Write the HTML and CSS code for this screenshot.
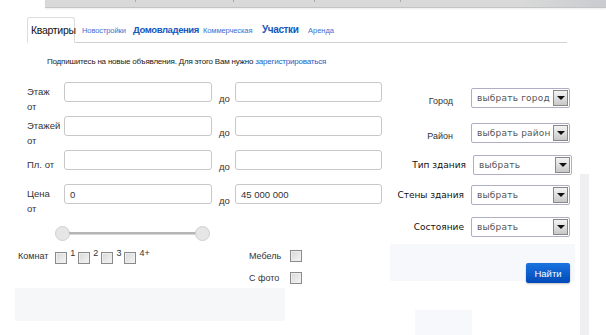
FILE: index.html
```
<!DOCTYPE html>
<html lang="ru">
<head>
    <meta charset="UTF-8">
    <meta name="viewport" content="width=device-width, initial-scale=1.0">
    <title>Поиск недвижимости</title>
    <link rel="stylesheet" href="styles.css">
</head>
<body>
    <div class="page">
        <!-- верхняя панель -->
        <div class="top-bar">
            <span class="top-cell c1"></span>
            <span class="top-cell c2"></span>
            <span class="top-cell c3"></span>
            <span class="top-cell c4"></span>
            <span class="top-cell c5"></span>
        </div>

        <!-- вкладки -->
        <div class="tabs">
            <span class="tab active">Квартиры</span>
            <a class="tab small t-new" href="#">Новостройки</a>
            <a class="tab big t-house" href="#">Домовладения</a>
            <a class="tab small t-comm" href="#">Коммерческая</a>
            <a class="tab big t-land" href="#">Участки</a>
            <a class="tab small t-rent" href="#">Аренда</a>
        </div>

        <p class="notice">Подпишитесь на новые объявления. Для этого Вам нужно <a href="#">зарегистрироваться</a></p>

        <div class="search">
            <!-- левая колонка -->
            <div class="search-left">
                <div class="range-grid">
                    <label class="range-label">Этаж<br>от</label>
                    <input class="text-input" type="text">
                    <span class="to">до</span>
                    <input class="text-input" type="text">

                    <label class="range-label">Этажей<br>от</label>
                    <input class="text-input" type="text">
                    <span class="to">до</span>
                    <input class="text-input" type="text">

                    <label class="range-label middle">Пл. от</label>
                    <input class="text-input" type="text">
                    <span class="to">до</span>
                    <input class="text-input" type="text">

                    <label class="range-label">Цена<br>от</label>
                    <input class="text-input" type="text" value="0">
                    <span class="to">до</span>
                    <input class="text-input" type="text" value="45 000 000">
                </div>

                <div class="slider">
                    <span class="knob"></span>
                    <span class="track"></span>
                    <span class="knob"></span>
                </div>

                <div class="options">
                    <div class="rooms">
                        <span class="opt-label">Комнат</span>
                        <span class="box"></span><sup>1</sup>
                        <span class="box"></span><sup>2</sup>
                        <span class="box"></span><sup>3</sup>
                        <span class="box"></span><sup>4+</sup>
                    </div>
                    <div class="extras">
                        <div class="extra"><span class="opt-label">Мебель</span><span class="box"></span></div>
                        <div class="extra"><span class="opt-label">С фото</span><span class="box"></span></div>
                    </div>
                </div>

                <div class="left-band"></div>
            </div>

            <!-- правая колонка -->
            <div class="search-right">
                <div class="select-row city-row">
                    <span class="sel-label thin">Город</span>
                    <div class="select"><span>выбрать город</span><b class="arrow"></b></div>
                </div>
                <div class="select-row district-row">
                    <span class="sel-label thin">Район</span>
                    <div class="select"><span>выбрать район</span><b class="arrow"></b></div>
                </div>
                <div class="select-row type-row">
                    <span class="sel-label">Тип здания</span>
                    <div class="select"><span>выбрать</span><b class="arrow"></b></div>
                </div>
                <div class="select-row">
                    <span class="sel-label">Стены здания</span>
                    <div class="select"><span>выбрать</span><b class="arrow"></b></div>
                </div>
                <div class="select-row">
                    <span class="sel-label">Состояние</span>
                    <div class="select"><span>выбрать</span><b class="arrow"></b></div>
                </div>
                <div class="right-band">
                    <button class="find-button">Найти</button>
                </div>
                <div class="small-band"></div>
            </div>

            <div class="side-strip"></div>
        </div>
    </div>
</body>
</html>
```
FILE: styles.css
```
/* общие настройки */
body {
    margin: 0;
    background: #fff;
    font-family: "Liberation Sans", Arial, sans-serif;
    color: #333;
}

.page {
    width: 606px;
    height: 335px;
    overflow: hidden;
}

a {
    color: #1a5fc8;
    text-decoration: none;
}

/* верхняя серая панель */
.top-bar {
    display: flex;
    margin-left: 45px;
    height: 7px;
    background: linear-gradient(to right, #d9d9d9 0%, #d9d9d9 85%, #c9ccd0 100%);
    border-bottom: 1px solid #c4c4c4;
    box-shadow: 0 1px 2px rgba(0, 0, 0, 0.08);
}

.top-cell {
    border-right: 1px solid #a8a8a8;
    height: 2px;
}
.c1 { width: 90px; }
.c2 { width: 97px; }
.c3 { width: 80px; }
.c4 { width: 85px; }
.c5 { border: none; }

/* вкладки */
.tabs {
    display: flex;
    align-items: center;
    margin: 9px 0 0 27px;
    width: 540px;
    height: 25px;
    border-bottom: 1px solid #d0d0d0;
}

.tab {
    white-space: nowrap;
}

.tab.active {
    box-sizing: border-box;
    align-self: stretch;
    display: flex;
    align-items: center;
    width: 48px;
    padding-left: 3px;
    margin-right: 7px;
    font-size: 10.5px;
    letter-spacing: -0.3px;
    color: #111;
    border: 1px solid #dcdcdc;
    border-bottom: 1px solid #fff;
    border-radius: 3px 3px 0 0;
    margin-bottom: -1px;
    background: #fff;
}

.tab.small {
    font-size: 7.5px;
    padding-top: 2px;
    color: #3a6fd0;
}

.tab.big {
    font-size: 9.5px;
    font-weight: bold;
    letter-spacing: -0.4px;
    color: #1458c0;
}

.t-new { width: 51px; letter-spacing: -0.1px; }
.t-house { width: 70px; }
.t-comm { width: 59px; letter-spacing: -0.1px; }
.t-land { width: 46px; font-size: 10px !important; }
.t-rent { width: 30px; }

.notice {
    margin: 14px 0 0 47px;
    font-size: 8px;
    letter-spacing: -0.2px;
    color: #222;
}

/* форма поиска */
.search {
    display: flex;
    margin-top: 16px;
}

.search-left {
    width: 390px;
}

.range-grid {
    display: grid;
    grid-template-columns: 37px 148px 23px 147px;
    grid-auto-rows: 20px;
    row-gap: 14px;
    margin-left: 27px;
}

.range-label {
    font-size: 9.5px;
    line-height: 15px;
    color: #333;
    margin-top: 2px;
    white-space: nowrap;
}

.range-label.middle {
    align-self: end;
    margin-top: 0;
    margin-bottom: -2px;
}

.text-input {
    box-sizing: border-box;
    width: 100%;
    height: 20px;
    border: 1px solid #c8c8c8;
    border-radius: 3px;
    padding: 0 5px;
    font-family: "Liberation Sans", Arial, sans-serif;
    font-size: 9.5px;
    color: #333;
    outline: none;
}

.to {
    align-self: end;
    padding-left: 7px;
    margin-bottom: -2px;
    font-size: 9.5px;
    color: #333;
}

/* ползунок */
.slider {
    display: flex;
    align-items: center;
    margin: 22px 0 0 55px;
    width: 155px;
}

.knob {
    flex: none;
    width: 13px;
    height: 13px;
    border: 1px solid #d0d0d0;
    border-radius: 50%;
    background: #e6e6e6;
}

.track {
    flex: 1;
    height: 2px;
    margin: 0 -1px;
    background: #b5b5b5;
    border-bottom: 1px solid #d6d6d6;
}

/* комнаты и дополнительные опции */
.options {
    display: flex;
    margin: 10px 0 0 18px;
    height: 37px;
}

.rooms {
    display: flex;
    align-items: flex-start;
    width: 231px;
}

.opt-label {
    font-size: 9px;
    color: #333;
}

.rooms .opt-label {
    margin-right: 7px;
}

.box {
    flex: none;
    box-sizing: border-box;
    width: 12px;
    height: 12px;
    margin-top: 1px;
    border: 1px solid #8a8a8a;
    background: linear-gradient(135deg, #d8d8d8, #f4f4f4);
    box-shadow: inset 0 0 0 1px #eee;
}

.rooms sup {
    font-size: 9px;
    line-height: 9px;
    vertical-align: top;
    margin: -2px 3px 0 3px;
}

.extras {
    display: flex;
    flex-direction: column;
    gap: 9px;
    margin-top: -2px;
}

.extra {
    display: flex;
    gap: 10px;
}

.extra .opt-label {
    width: 31px;
    margin-top: 2px;
}

.left-band {
    margin: 0 105px 0 15px;
    height: 33px;
    background: #f6f7f9;
}

/* правая колонка */
.search-right {
    width: 190px;
    padding-top: 6px;
}

.select-row {
    display: flex;
    align-items: center;
    justify-content: flex-end;
    gap: 7px;
    height: 20px;
    margin-bottom: 12px;
    padding-right: 10px;
}

.city-row {
    margin-bottom: 15px;
}

.district-row {
    margin-bottom: 12px;
}

.type-row {
    padding-right: 8px;
    margin-bottom: 10px;
}

.sel-label {
    font-family: "DejaVu Sans", Verdana, sans-serif;
    font-size: 9px;
    color: #111;
    white-space: nowrap;
}

.sel-label.thin {
    font-family: "Liberation Sans", Tahoma, sans-serif;
    font-size: 9px;
    color: #333;
    margin-right: 11px;
    padding-top: 6px;
}

.select {
    box-sizing: border-box;
    display: flex;
    align-items: center;
    justify-content: space-between;
    width: 99px;
    height: 20px;
    border: 1px solid #aeaec4;
    border-radius: 2px;
    padding: 1px 1px 1px 5px;
    font-family: "DejaVu Sans", Verdana, sans-serif;
    font-size: 9px;
    letter-spacing: 0.2px;
    color: #555;
    overflow: hidden;
    white-space: nowrap;
    background: #fff;
}

.select span {
    overflow: hidden;
}

.arrow {
    position: relative;
    flex: none;
    box-sizing: border-box;
    width: 15px;
    height: 16px;
    border: 1px solid #888;
    background: linear-gradient(#f4f4f4, #c8c8c8);
}

/* треугольник стрелки */
.arrow::after {
    content: "";
    position: absolute;
    left: 3px;
    top: 5px;
    border-left: 4px solid transparent;
    border-right: 4px solid transparent;
    border-top: 4px solid #111;
}

.right-band {
    display: flex;
    justify-content: flex-end;
    align-items: flex-end;
    width: 185px;
    height: 37px;
    margin-top: -5px;
    background: #f7f8fb;
}

.find-button {
    width: 44px;
    height: 20px;
    margin: 0 5px -2px 0;
    border: none;
    border-radius: 2px;
    background: linear-gradient(#1a74e0, #0049b8);
    color: #fff;
    font-family: "Liberation Sans", Arial, sans-serif;
    font-size: 9.5px;
    box-shadow: 0 1px 2px rgba(0, 0, 0, 0.25);
}

.small-band {
    margin: 29px 0 0 25px;
    width: 57px;
    height: 30px;
    background: #f7f8fb;
}

.side-strip {
    width: 9px;
    margin: 92px 0 0 0;
    background: #efeff2;
}
```
